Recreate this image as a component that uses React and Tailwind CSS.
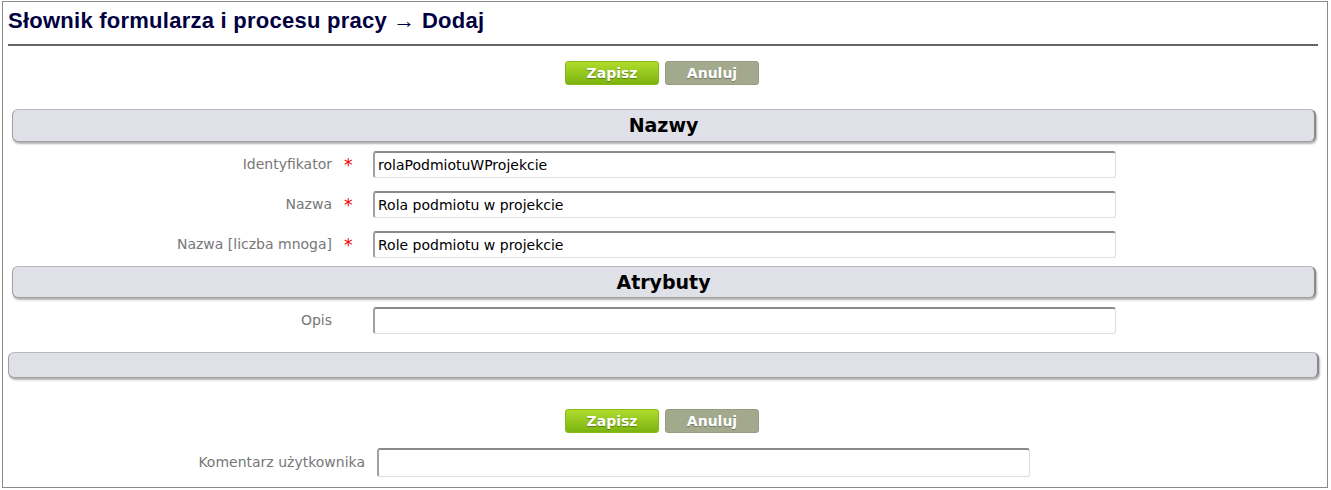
import React from 'react';

const verdana = { fontFamily: '"DejaVu Sans", Verdana, sans-serif' };

function Buttons() {
    return (
        <div className="flex justify-center gap-[6px] pr-[6px]">
            <button
                className="w-[94px] h-[24px] rounded-[3px] border border-[#86b817] bg-gradient-to-b from-[#b0dc2c] to-[#7cb40f] text-white text-[14px] font-bold [text-shadow:0_1px_1px_rgba(0,0,0,0.35)]"
                style={verdana}
            >
                Zapisz
            </button>
            <button
                className="w-[94px] h-[24px] rounded-[3px] border border-[#959c80] bg-[#a2a98c] text-white text-[14px] font-bold [text-shadow:0_1px_1px_rgba(0,0,0,0.3)]"
                style={verdana}
            >
                Anuluj
            </button>
        </div>
    );
}

function SectionBar({ title, className = '' }) {
    return (
        <div
            className={`rounded-[6px] bg-[#e0e0e8] border border-[#a0a0a0] border-t-[#b8b8b8] border-r-2 border-r-[#8a8a8a] shadow-[1px_2px_2px_rgba(0,0,0,0.3)] flex items-center justify-center text-[19px] font-bold text-black ${className}`}
            style={verdana}
        >
            {title}
        </div>
    );
}

function Field({ label, value, required }) {
    return (
        <div className="flex items-center h-[27px]">
            <div className="w-[329px] text-right text-[14px] text-[#777]" style={verdana}>
                {label}
            </div>
            <div className="w-[41px] pl-[12px] text-[17px] text-[#e00] leading-none pt-[2px]" style={verdana}>
                {required ? '*' : ''}
            </div>
            <input
                readOnly
                value={value}
                className="w-[743px] h-[27px] rounded-[3px] border border-[#ddd] border-t-2 border-t-[#8a8a8a] border-l-2 border-l-[#a0a0a0] px-[3px] text-[14px] text-black outline-none bg-white"
                style={verdana}
            />
        </div>
    );
}

export default function App() {
    return (
        <div className="w-[1331px] h-[490px] bg-white pl-[2px] pt-[1px]">
            <div className="w-[1326px] h-[487px] border border-[#8a8a8a] flex flex-col">
                <h1
                    className="ml-[5px] mt-[5px] text-[22px] leading-[27px] font-bold text-[#000040] tracking-[0.25px]"
                    style={{ fontFamily: '"Liberation Sans", Arial, sans-serif' }}
                >
                    Słownik formularza i procesu pracy → Dodaj
                </h1>
                <div className="ml-[5px] mr-[9px] mt-[10px] h-[2px] bg-[#666]" />

                <div className="mt-[15px]">
                    <Buttons />
                </div>

                <SectionBar title="Nazwy" className="mt-[24px] ml-[9px] mr-[11px] h-[33px]" />

                <div className="flex flex-col gap-[13px] mt-[9px]">
                    <Field label="Identyfikator" value="rolaPodmiotuWProjekcie" required />
                    <Field label="Nazwa" value="Rola podmiotu w projekcie" required />
                    <Field label="Nazwa [liczba mnoga]" value="Role podmiotu w projekcie" required />
                </div>

                <SectionBar title="Atrybuty" className="mt-[8px] ml-[9px] mr-[11px] h-[32px]" />

                <div className="mt-[9px]">
                    <Field label="Opis" value="" />
                </div>

                <SectionBar title="" className="mt-[18px] ml-[5px] mr-[8px] h-[26px]" />

                <div className="mt-[31px]">
                    <Buttons />
                </div>

                <div className="flex items-center mt-[15px]">
                    <div className="w-[362px] text-right text-[14px] text-[#777]" style={verdana}>
                        Komentarz użytkownika
                    </div>
                    <input
                        readOnly
                        value=""
                        className="ml-[12px] w-[653px] h-[29px] rounded-[3px] border border-[#ddd] border-t-2 border-t-[#8a8a8a] border-l-2 border-l-[#a0a0a0] px-[3px] text-[14px] outline-none bg-white"
                        style={verdana}
                    />
                </div>
            </div>
        </div>
    );
}
